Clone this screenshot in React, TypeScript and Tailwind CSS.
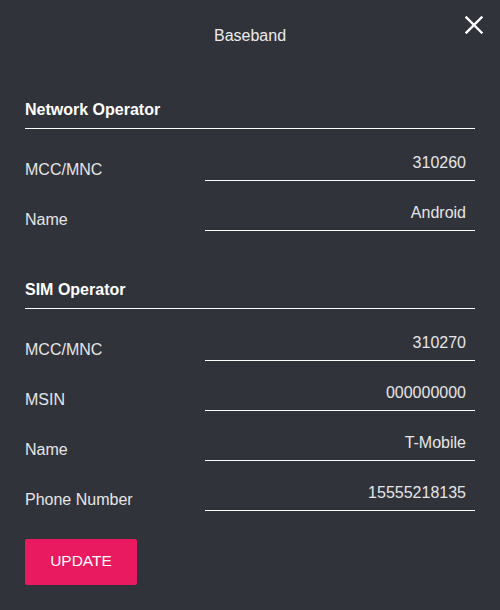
import React from "react";

interface Field {
  label: string;
  value: string;
}

const network: Field[] = [
  { label: "MCC/MNC", value: "310260" },
  { label: "Name", value: "Android" },
];

const sim: Field[] = [
  { label: "MCC/MNC", value: "310270" },
  { label: "MSIN", value: "000000000" },
  { label: "Name", value: "T-Mobile" },
  { label: "Phone Number", value: "15555218135" },
];

function Row({ label, value }: Field) {
  return (
    <div className="flex h-[50px]">
      <div className="flex-1 self-center pt-[1px] leading-[20px] text-[16px] text-[#e6e6e6]">{label}</div>
      <div className="w-[270px] h-[37px] self-start border-b border-white pr-[9px] pt-[9px] text-right leading-[20px] text-[16px] text-[#e6e6e6]">
        {value}
      </div>
    </div>
  );
}

function Section({ title, fields, first }: { title: string; fields: Field[]; first?: boolean }) {
  return (
    <section className={first ? "mt-[30px]" : "mt-[36px]"}>
      <h2 className="border-b border-white pb-[8px] text-[16px] font-bold leading-[20px] text-white">{title}</h2>
      <div className="pt-[15px]">
        {fields.map((f, i) => (
          <Row key={i} {...f} />
        ))}
      </div>
    </section>
  );
}

export default function App() {
  return (
    <div
      className="relative w-[500px] h-[610px] bg-[#31333b] px-[25px]"
      style={{ fontFamily: '"Liberation Sans", Arial, sans-serif' }}
    >
      {/* Header */}
      <header className="flex h-[70px] items-center justify-center pt-[2px]">
        <h1 className="text-[16px] leading-[20px] text-[#ececec]">Baseband</h1>
        <button className="absolute right-[17px] top-[16px] p-0" aria-label="Close">
          <svg width="18" height="18" viewBox="0 0 18 18">
            <path d="M1.5 1.5 L16.5 16.5 M16.5 1.5 L1.5 16.5" stroke="#ffffff" strokeWidth="2.4" strokeLinecap="square" />
          </svg>
        </button>
      </header>

      <Section title="Network Operator" fields={network} first />
      <Section title="SIM Operator" fields={sim} />

      <button className="mt-[15px] h-[46px] w-[112px] rounded-[2px] bg-[#e91a5f] pb-[3px] text-[15.5px] text-white">
        UPDATE
      </button>
    </div>
  );
}
